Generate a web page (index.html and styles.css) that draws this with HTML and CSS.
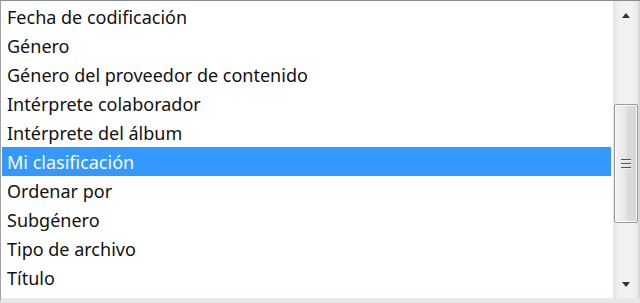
FILE: index.html
```html
<!DOCTYPE html>
<html>
<head>
    <meta charset="UTF-8">
    <title>Columnas</title>
    <link rel="stylesheet" href="styles.css">
</head>
<body>
    <div class="listbox">
        <ul class="items">
            <li>Fecha de codificación</li>
            <li>Género</li>
            <li>Género del proveedor de contenido</li>
            <li>Intérprete colaborador</li>
            <li>Intérprete del álbum</li>
            <li class="selected">Mi clasificación</li>
            <li>Ordenar por</li>
            <li>Subgénero</li>
            <li>Tipo de archivo</li>
            <li>Título</li>
        </ul>
        <div class="scrollbar">
            <div class="arrow up"></div>
            <div class="track">
                <div class="thumb">
                    <span class="grip"></span>
                    <span class="grip"></span>
                    <span class="grip"></span>
                </div>
            </div>
            <div class="arrow down"></div>
        </div>
    </div>
</body>
</html>
```

FILE: styles.css
```css
* {
    margin: 0;
    padding: 0;
    box-sizing: border-box;
}

body {
    background: #fff;
    font-family: "Noto Sans", "Open Sans", sans-serif;
    overflow: hidden;
}

.listbox {
    display: flex;
    width: 640px;
    height: 303px;
    border-top: 1px solid #8a8c8e;
    border-left: 1px solid #a0a2a4;
    border-bottom: 5px solid #e3e8ec;
    background: #fff;
}

.items {
    flex: 1;
    list-style: none;
    padding: 1px 2px 0 1px;
}

.items li {
    height: 29px;
    line-height: 30px;
    padding-left: 5px;
    font-size: 18px;
    color: #111;
    white-space: nowrap;
}

.items li.selected {
    background: #3399ff;
    color: #fff;
}

.scrollbar {
    width: 27px;
    display: flex;
    flex-direction: column;
    background: linear-gradient(to right, #e6e6e6, #f2f2f2 30%, #f2f2f2 80%, #e8e8e8);
    border-right: 2px solid #d8d8d8;
}

.arrow {
    height: 28px;
    display: flex;
    justify-content: center;
    align-items: center;
}

.arrow::before {
    content: "";
    border-left: 4px solid transparent;
    border-right: 4px solid transparent;
}

.arrow.up::before {
    border-bottom: 5px solid #333;
}

.arrow.down::before {
    border-top: 5px solid #333;
}

.track {
    flex: 1;
    padding-top: 75px;
}

.thumb {
    width: 24px;
    height: 119px;
    margin-left: 1px;
    border: 1px solid #9a9a9a;
    border-radius: 2px;
    background: linear-gradient(to right, #f4f4f4, #e8e8e8 45%, #dcdcdc 55%, #d6d6d6);
    box-shadow: inset 0 0 0 1px #fbfbfb;
    display: flex;
    flex-direction: column;
    align-items: center;
    justify-content: center;
    gap: 2px;
}

.grip {
    width: 10px;
    height: 2px;
    background: #555;
    border-bottom: 1px solid #eee;
}
```
